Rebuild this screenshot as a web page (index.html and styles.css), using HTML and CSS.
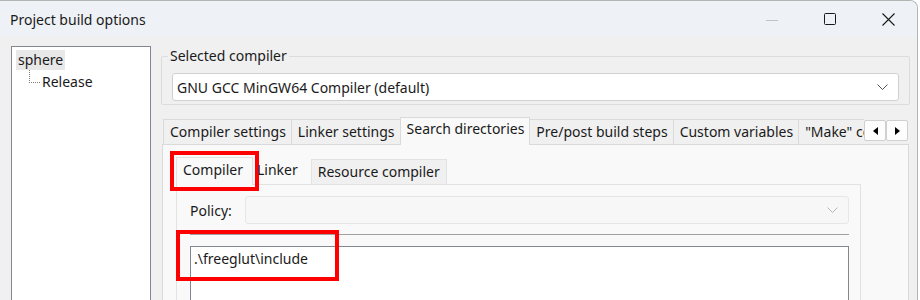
FILE: index.html
```html
<!DOCTYPE html>
<html lang="en">
<head>
    <meta charset="UTF-8">
    <title>Project build options</title>
    <link rel="stylesheet" href="styles.css">
</head>
<body>
    <div class="window">
        <div class="titlebar">
            <span class="title">Project build options</span>
            <div class="controls">
                <svg class="ctl" width="12" height="12" viewBox="0 0 12 12"><path d="M0 6.5h12" stroke="#c4c4c4" stroke-width="1"/></svg>
                <svg class="ctl" width="12" height="12" viewBox="0 0 12 12"><rect x="0.5" y="0.5" width="11" height="11" rx="1" fill="none" stroke="#1a1a1a"/></svg>
                <svg class="ctl" width="13" height="13" viewBox="0 0 13 13"><path d="M0.5 0.5l12 12M12.5 0.5l-12 12" stroke="#1a1a1a" stroke-width="1.1"/></svg>
            </div>
        </div>
        <div class="content">
            <div class="tree">
                <div class="node selected">sphere</div>
                <div class="child">
                    <span class="connector"></span>
                    <span>Release</span>
                </div>
            </div>
            <div class="main">
                <fieldset class="group">
                    <legend>Selected compiler</legend>
                    <div class="combo">
                        <span>GNU GCC MinGW64 Compiler (default)</span>
                        <svg width="11" height="6" viewBox="0 0 11 6"><path d="M0.5 0.5l5 5 5-5" fill="none" stroke="#555"/></svg>
                    </div>
                </fieldset>
                <div class="tabs">
                    <div class="tab">Compiler settings</div>
                    <div class="tab">Linker settings</div>
                    <div class="tab active">Search directories</div>
                    <div class="tab">Pre/post build steps</div>
                    <div class="tab">Custom variables</div>
                    <div class="tab clipped">"Make" commands</div>
                    <div class="scroller">
                        <div class="arrow"><svg width="5" height="8" viewBox="0 0 5 8"><path d="M5 0v8L0 4z" fill="#000"/></svg></div>
                        <div class="arrow"><svg width="5" height="8" viewBox="0 0 5 8"><path d="M0 0v8l5-4z" fill="#000"/></svg></div>
                    </div>
                </div>
                <div class="tabpanel">
                    <div class="subtabs">
                        <div class="subtab active marked">Compiler</div>
                        <div class="subtab plain">Linker</div>
                        <div class="subtab">Resource compiler</div>
                    </div>
                    <div class="subpanel">
                        <div class="policy">
                            <label>Policy:</label>
                            <div class="combo disabled">
                                <span></span>
                                <svg width="11" height="6" viewBox="0 0 11 6"><path d="M0.5 0.5l5 5 5-5" fill="none" stroke="#b5b5b5"/></svg>
                            </div>
                        </div>
                        <div class="sep"></div>
                        <div class="listbox">
                            <div class="item">.\freeglut\include</div>
                        </div>
                        <span class="mark-box"></span>
                    </div>
                </div>
            </div>
        </div>
    </div>
</body>
</html>
```

FILE: styles.css
```css
html, body {
    margin: 0;
    background: #ffffff;
}
body {
    font-family: "Noto Sans", "Open Sans", sans-serif;
    font-size: 14px;
    color: #1a1a1a;
}
.window {
    width: 917px;
    height: 299px;
    overflow: hidden;
    background: #f0f0f0;
    border-top: 1px solid #b4b4b4;
    border-right: 1px solid #b4b4b4;
    border-top-right-radius: 8px;
}
.titlebar {
    height: 36px;
    background: #eef2f6;
    display: flex;
    align-items: center;
    justify-content: space-between;
}
.title {
    padding-left: 10px;
    font-size: 14px;
}
.controls {
    display: flex;
    align-items: center;
    gap: 46px;
    padding-right: 22px;
}
.controls .ctl:first-child {
    margin-top: 1px;
}
.content {
    display: flex;
    padding: 9px 0 0 11px;
    gap: 10px;
}
.tree {
    width: 140px;
    height: 260px;
    background: #fff;
    border: 1px solid #828790;
    padding: 3px 0 0 4px;
    box-sizing: border-box;
}
.node {
    display: inline-block;
    padding: 0 2px;
    line-height: 20px;
}
.node.selected {
    background: #e8e8e8;
}
.child {
    display: flex;
    align-items: center;
    line-height: 20px;
    padding-left: 13px;
    margin-top: 2px;
}
.connector {
    width: 10px;
    height: 12px;
    margin: -12px 2px 0 0;
    border-left: 1px dotted #808080;
    border-bottom: 1px dotted #808080;
}
.main {
    width: 749px;
}
.group {
    margin: 0;
    padding: 7px 10px 3px 10px;
    border: 1px solid #dcdcdc;
    border-radius: 2px;
}
.group legend {
    padding: 0 2px;
    margin-left: -4px;
    font-size: 14px;
    line-height: 20px;
}
.combo {
    height: 28px;
    box-sizing: border-box;
    background: #fff;
    border: 1px solid #d0d0d0;
    border-radius: 3px;
    display: flex;
    align-items: center;
    justify-content: space-between;
    padding: 0 10px 0 4px;
}
.combo.disabled {
    background: #f7f7f7;
    border-color: #e6e6e6;
}
.tabs {
    display: flex;
    align-items: flex-end;
    height: 27px;
    margin-top: 12px;
    padding-left: 2px;
    position: relative;
    z-index: 1;
}
.tab {
    height: 25px;
    box-sizing: border-box;
    padding: 2px 5px 0 6px;
    border: 1px solid #dadada;
    border-bottom: none;
    border-right: none;
    background: #f0f0f0;
    white-space: nowrap;
}
.tab.active {
    height: 28px;
    margin-bottom: -1px;
    padding-top: 1px;
    background: #f9f9f9;
    border-right: 1px solid #dadada;
}
.tab.active + .tab {
    border-left: none;
}
.tab.clipped {
    width: 66px;
    overflow: hidden;
}
.scroller {
    display: flex;
    align-self: flex-start;
    margin-top: 3px;
}
.arrow {
    width: 22px;
    height: 21px;
    box-sizing: border-box;
    background: #fdfdfd;
    border: 1px solid #d0d0d0;
    border-radius: 2px;
    display: flex;
    align-items: center;
    justify-content: center;
}
.tabpanel {
    width: 747px;
    height: 160px;
    box-sizing: border-box;
    margin-left: 1px;
    background: #f9f9f9;
    border: 1px solid #dadada;
    padding: 11px 47px 0 13px;
}
.subtabs {
    display: flex;
    align-items: flex-end;
    height: 28px;
    position: relative;
    z-index: 1;
}
.subtab {
    height: 25px;
    box-sizing: border-box;
    padding: 2px 6px 0 6px;
    border: 1px solid #e2e2e2;
    border-bottom: none;
    background: #f0f0f0;
    white-space: nowrap;
}
.subtab.active {
    height: 28px;
    margin-bottom: -1px;
    padding-top: 2px;
    width: 77px;
    background: #f9f9f9;
}
.subtab.plain {
    border: none;
    background: none;
    padding: 1px 13px 0 4px;
}
.marked {
    outline: 4px solid #ff0000;
    outline-offset: 2px;
}
.subpanel {
    height: 120px;
    border: 1px solid #e2e2e2;
    padding: 11px 11px 0 13px;
    position: relative;
}
.policy {
    display: flex;
    align-items: center;
    gap: 13px;
}
.policy .combo {
    flex: 1;
    height: 28px;
}
.sep {
    height: 1px;
    margin: 10px 0 11px 0;
    background: #a0a0a0;
}
.listbox {
    height: 70px;
    background: #fff;
    border: 1px solid #828790;
    padding: 2px 3px;
}
.item {
    line-height: 20px;
}
.mark-box {
    position: absolute;
    left: -1px;
    top: 45px;
    width: 155px;
    height: 43px;
    border: 4px solid #ff0000;
}
```
